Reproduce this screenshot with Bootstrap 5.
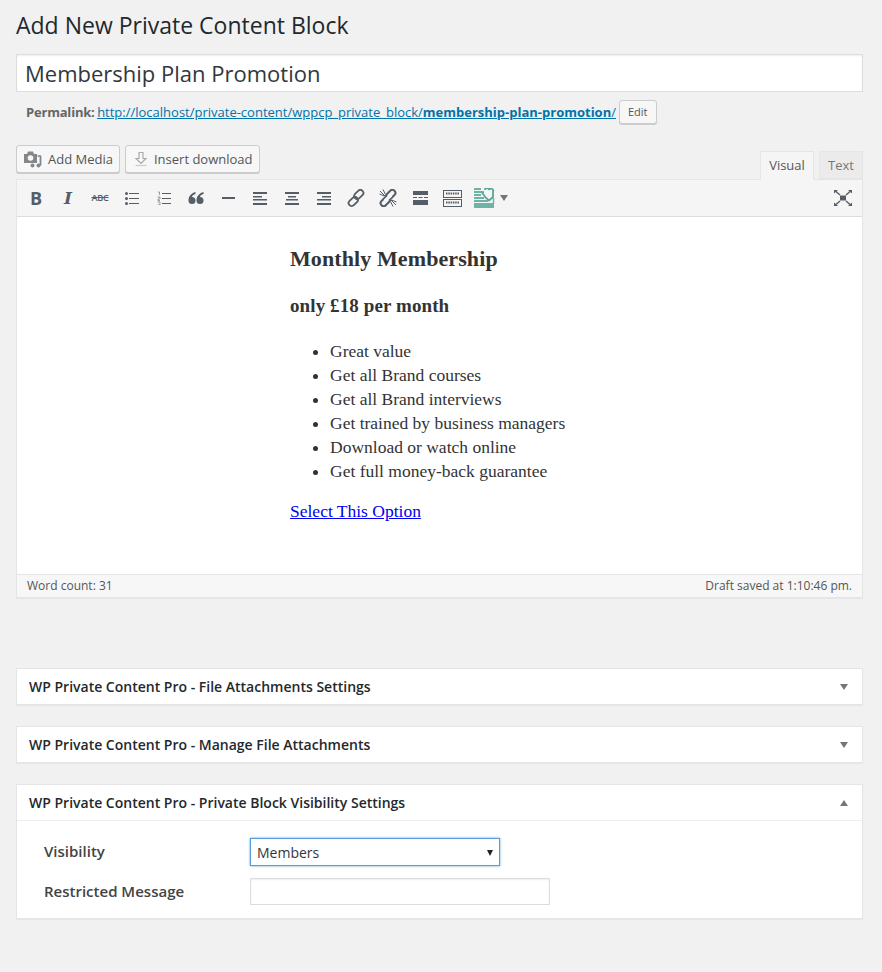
<!DOCTYPE html>
<html lang="en">
<head>
  <meta charset="UTF-8">
  <title>Add New Private Content Block</title>
  <link href="https://cdn.jsdelivr.net/npm/bootstrap@5.3.2/dist/css/bootstrap.min.css" rel="stylesheet">
  <style>
    body { background: #f1f1f1; color: #444; font-family: "Open Sans", sans-serif; font-size: 13px; line-height: 1.4; }
    .wrap-page { padding: 0 19px 0 16px; }
    .page-title { font-size: 23px; font-weight: 400; color: #23282d; line-height: 29px; margin: 0; padding: 11px 0 14px; }
    .title-field { display: block; width: 100%; height: 38px; border: 1px solid #ddd; background: #fff; color: #32373c; font-size: 22px; padding: 3px 8px; outline: 0; box-shadow: inset 0 1px 2px rgba(0,0,0,.07); }
    .slug-row { height: 28px; margin-top: 6px; padding-left: 10px; color: #666; }
    .slug-row > strong { letter-spacing: -.2px; }
    .slug-row a { color: #0073aa; margin-left: 2.500px; }
    .wp-btn { display: inline-flex; align-items: center; background: #f7f7f7; border: 1px solid #ccc; border-radius: 3px; box-shadow: 0 1px 0 #ccc; color: #555; font-size: 13px; height: 28px; padding: 0 6px 0 7px; line-height: 26px; }
    .wp-btn-sm { height: 24px; font-size: 11px; padding: 0 8px; margin-left: 3px; }
    .media-row { height: 34px; margin-top: 19px; }
    .media-btns { gap: 5px; }
    .ic-media { margin-right: 6px; }
    .ic-down { margin: 0 6px 0 1px; }
    .edit-tab { height: 28px; width: 54px; margin-top: 6px; border: 1px solid #e5e5e5; background: #ebebeb; color: #777; text-align: center; line-height: 27px; }
    .edit-tab-on { height: 29px; background: #f5f5f5; border-bottom-color: #f5f5f5; color: #555; position: relative; z-index: 1; }
    .edit-tab-text { width: 44px; margin-left: 5px; }
    .editor-box { border: 1px solid #e5e5e5; background: #fff; box-shadow: 0 1px 1px rgba(0,0,0,.04); }
    .tool-strip { height: 37px; background: #f5f5f5; border-bottom: 1px solid #ddd; padding-left: 3px; color: #555d66; }
    .tool-btn { width: 32px; height: 36px; display: flex; align-items: center; justify-content: center; flex: none; }
    .tool-btn svg { display: block; }
    .tool-end { margin-left: auto; margin-right: 3px; }
    .glyph-b { font: 700 18px "Open Sans", sans-serif; color: #555d66; }
    .glyph-i { font: italic 700 17px "DejaVu Serif", serif; color: #555d66; }
    .glyph-abc { font-size: 9px; font-weight: 600; text-decoration: line-through; color: #555d66; letter-spacing: -.2px; }
    .editor-body { height: 357px; padding-left: 273px; padding-top: 26px; font-family: "Liberation Serif", serif; font-size: 17.500px; line-height: 24px; color: #333; }
    .editor-body h2 { font-size: 22px; font-weight: 700; margin: 0 0 19px; line-height: 32px; letter-spacing: .1px; }
    .editor-body h3 { font-size: 19px; font-weight: 700; margin: 0 0 21px; line-height: 24px; letter-spacing: .1px; }
    .editor-body ul { margin: 0 0 16px; padding-left: 40px; }
    .editor-body a { color: #00e; }
    .status-strip { height: 23px; background: #f7f7f7; border-top: 1px solid #e5e5e5; font-size: 12px; color: #555; padding: 0 10px; line-height: 21px; }
    .meta-box { border: 1px solid #e5e5e5; background: #fff; box-shadow: 0 1px 1px rgba(0,0,0,.04); margin-bottom: 21px; }
    .meta-first { margin-top: 70px; }
    .meta-head { height: 35px; padding: 0 12px; font-size: 14px; font-weight: 600; color: #23282d; }
    .meta-open { height: 36px; border-bottom: 1px solid #eee; }
    .arrow-down, .arrow-up { width: 0; height: 0; border-left: 4px solid transparent; border-right: 4px solid transparent; margin-right: 2px; }
    .arrow-down { border-top: 6px solid #72777c; }
    .arrow-up { border-bottom: 6px solid #72777c; }
    .meta-body { padding: 17px 27px 13px; }
    .field-label { width: 206px; font-size: 15px; font-weight: 600; color: #444; flex: none; }
    .label-up { margin-top: -2px; }
    .vis-select { width: 250px; height: 28px; border: 1px solid #5b9dd9; box-shadow: 0 0 2px rgba(30,140,190,.8); background: #fff; font-size: 14px; padding: 1px 6px 0; color: #32373c; }
    .msg-input { width: 300px; height: 27px; border: 1px solid #ddd; background: #fff; box-shadow: inset 0 1px 2px rgba(0,0,0,.07); }
    .select-caret { width: 0; height: 0; border-left: 3.500px solid transparent; border-right: 3.500px solid transparent; border-top: 6px solid #222; }
  </style>
</head>
<body>
  <svg width="0" height="0" class="d-block">
    <symbol id="ic-left" viewBox="0 0 15 14"><path d="M0 1h14v2H0zM0 5h9v1.500H0zM0 8h14v1.500H0zM0 12h14v2H0z" fill="#555d66"/></symbol>
    <symbol id="ic-center" viewBox="0 0 15 14"><path d="M0 1h14v2H0zM3 5h8v1.500H3zM1 8h12v1.500H1zM0 12h14v2H0z" fill="#555d66"/></symbol>
    <symbol id="ic-right" viewBox="0 0 15 14"><path d="M0 1h14v2H0zM5 5h9v1.500H5zM0 8h14v1.500H0zM0 12h14v2H0z" fill="#555d66"/></symbol>
  </svg>
  <div class="wrap-page">
    <h1 class="page-title">Add New Private Content Block</h1>
    <input class="title-field" type="text" value="Membership Plan Promotion">
    <div class="slug-row d-flex align-items-center">
      <strong>Permalink:</strong><a href="#">http://localhost/private-content/wppcp_private_block/<strong>membership-plan-promotion</strong>/</a>
      <span class="wp-btn wp-btn-sm">Edit</span>
    </div>

    <div class="media-row d-flex justify-content-between">
      <div class="d-flex media-btns">
        <span class="wp-btn">
          <svg width="18" height="17" viewBox="0 0 18 17" class="ic-media"><path d="M0 3h3l1-2.500h5l1 2.500h3v9H0z" fill="#82878c"/><circle cx="6.500" cy="7" r="2.800" fill="#f7f7f7"/><path d="M16.500 5v9.500" stroke="#82878c" stroke-width="1.800"/><path d="M13.500 5h3.500" stroke="#82878c" stroke-width="1.500"/><circle cx="14.500" cy="14.500" r="2" fill="#82878c"/><circle cx="8.500" cy="14.500" r="2" fill="#82878c"/></svg>
          Add Media
        </span>
        <span class="wp-btn">
          <svg width="14" height="15" viewBox="0 0 14 15" class="ic-down"><path d="M5 .500h4v6h3l-5 5-5-5h3z" fill="none" stroke="#aaa" stroke-width="1.200"/><path d="M1.500 13.500h11" stroke="#ccc" stroke-width="1.200"/></svg>
          Insert download
        </span>
      </div>
      <div class="d-flex">
        <div class="edit-tab edit-tab-on">Visual</div>
        <div class="edit-tab edit-tab-text">Text</div>
      </div>
    </div>

    <div class="editor-box">
      <div class="tool-strip d-flex align-items-center">
        <div class="tool-btn"><span class="glyph-b">B</span></div>
        <div class="tool-btn"><span class="glyph-i">I</span></div>
        <div class="tool-btn"><span class="glyph-abc">ABC</span></div>
        <div class="tool-btn"><svg width="14" height="13" viewBox="0 0 14 13"><path d="M4 1.500h10M4 6.500h10M4 11.500h10" stroke="#555d66"/><circle cx="1.500" cy="1.500" r="1.500" fill="#555d66"/><circle cx="1.500" cy="6.500" r="1.500" fill="#555d66"/><circle cx="1.500" cy="11.500" r="1.500" fill="#555d66"/></svg></div>
        <div class="tool-btn"><svg width="14" height="14" viewBox="0 0 14 14"><path d="M5 2.500h9M5 7.500h9M5 12.500h9" stroke="#555d66"/><path d="M1 1h1.500v3M.5 6h2.500v2H1v1.500h2M.5 11H3v3H.5" fill="none" stroke="#777" stroke-width=".7"/></svg></div>
        <div class="tool-btn"><svg width="16" height="13" viewBox="0 0 16 13"><path d="M7.500 0C3 1.500.5 4 .5 8.500a3.500 3.500 0 1 0 3.500-3.500c0-1.500 1.500-2.500 3.500-3zM15.500 0C11 1.500 8.500 4 8.500 8.500a3.500 3.500 0 1 0 3.500-3.500c0-1.500 1.500-2.500 3.500-3z" fill="#555d66"/></svg></div>
        <div class="tool-btn"><svg width="13" height="2" viewBox="0 0 13 2"><path d="M0 0h13v2H0z" fill="#555d66"/></svg></div>
        <div class="tool-btn"><svg width="15" height="14"><use href="#ic-left"/></svg></div>
        <div class="tool-btn"><svg width="15" height="14"><use href="#ic-center"/></svg></div>
        <div class="tool-btn"><svg width="15" height="14"><use href="#ic-right"/></svg></div>
        <div class="tool-btn"><svg width="18" height="18" viewBox="0 0 18 18"><g fill="none" stroke="#555d66" stroke-width="1.800"><rect x="1" y="9.500" width="10.500" height="6" rx="3" transform="rotate(-45 6.250 12.500)"/><rect x="6.500" y="2.500" width="10.500" height="6" rx="3" transform="rotate(-45 11.750 5.500)"/></g></svg></div>
        <div class="tool-btn"><svg width="18" height="18" viewBox="0 0 18 18"><g fill="none" stroke="#555d66" stroke-width="2"><rect x="1" y="9.500" width="10.500" height="6" rx="3" transform="rotate(-45 6.250 12.500)"/><rect x="6.500" y="2.500" width="10.500" height="6" rx="3" transform="rotate(-45 11.750 5.500)"/></g><path d="M6 12l6-6" stroke="#f5f5f5" stroke-width="3.500"/><path d="M1 2l5 5M4 .500l2.500 5M.5 5l5 2M17 16l-5-5M14 17.500l-2.500-5M17.500 13l-5-2" stroke="#555d66"/></svg></div>
        <div class="tool-btn"><svg width="15" height="14" viewBox="0 0 15 14"><path d="M0 0h15v4H0zM0 9h15v5H0z" fill="#555d66"/><path d="M0 6.500h4M5.500 6.500h4M11 6.500h4" stroke="#555d66" stroke-width="1.200"/></svg></div>
        <div class="tool-btn"><svg width="19" height="17" viewBox="0 0 19 17"><rect x=".5" y=".5" width="18" height="7" fill="none" stroke="#555d66"/><rect x=".5" y="9.500" width="18" height="7" fill="none" stroke="#555d66"/><path d="M3 3.500h13M3 12.500h13" stroke="#555d66" stroke-width="2" stroke-dasharray="1.500 .8"/></svg></div>
        <div class="tool-btn"><svg width="21" height="20" viewBox="0 0 21 20"><path d="M0 0h7v2H0zM0 3h10v2H0zM0 6h7v2H0zM0 9h10v2H0zM0 12h14v2H0zM0 15h20v5H0z" fill="#6eb3a5"/><path d="M8 4.500l3.500 5 3.500 3 4-3.500V3.500a2 2 0 0 0-4-1.500 2 2 0 0 0-4 0" fill="none" stroke="#5aa797" stroke-width="1.800"/><path d="M19.500 10v6" stroke="#6eb3a5" stroke-width="1.500"/></svg></div>
        <div class="arrow-down"></div>
        <div class="tool-btn tool-end"><svg width="18" height="16" viewBox="0 0 18 16"><path d="M6 5.500h6v5H6z" fill="#555d66"/><path d="M2 1.500l4 3.500M16 1.500l-4 3.500M2 14.500l4-3.500M16 14.500l-4-3.500" stroke="#555d66" stroke-width="1.400"/><path d="M0 0h4L0 3.500zM18 0h-4l4 3.500zM0 16h4l-4-3.500zM18 16h-4l4-3.500z" fill="#555d66"/></svg></div>
      </div>
      <div class="editor-body">
        <h2>Monthly Membership</h2>
        <h3>only £18 per month</h3>
        <ul>
          <li>Great value</li>
          <li>Get all Brand courses</li>
          <li>Get all Brand interviews</li>
          <li>Get trained by business managers</li>
          <li>Download or watch online</li>
          <li>Get full money-back guarantee</li>
        </ul>
        <a href="#">Select This Option</a>
      </div>
      <div class="status-strip d-flex justify-content-between">
        <span>Word count: 31</span>
        <span>Draft saved at 1:10:46 pm.</span>
      </div>
    </div>

    <div class="meta-box meta-first">
      <div class="meta-head d-flex align-items-center justify-content-between">WP Private Content Pro - File Attachments Settings<span class="arrow-down"></span></div>
    </div>
    <div class="meta-box">
      <div class="meta-head d-flex align-items-center justify-content-between">WP Private Content Pro - Manage File Attachments<span class="arrow-down"></span></div>
    </div>
    <div class="meta-box">
      <div class="meta-head meta-open d-flex align-items-center justify-content-between">WP Private Content Pro - Private Block Visibility Settings<span class="arrow-up"></span></div>
      <div class="meta-body">
        <div class="d-flex align-items-center mb-2">
          <div class="field-label label-up">Visibility</div>
          <div class="vis-select d-flex align-items-center justify-content-between">Members<span class="select-caret"></span></div>
        </div>
        <div class="d-flex align-items-center pt-1">
          <div class="field-label">Restricted Message</div>
          <input class="msg-input" type="text">
        </div>
      </div>
    </div>
  </div>
  <script src="https://cdn.jsdelivr.net/npm/bootstrap@5.3.2/dist/js/bootstrap.bundle.min.js"></script>
</body>
</html>
